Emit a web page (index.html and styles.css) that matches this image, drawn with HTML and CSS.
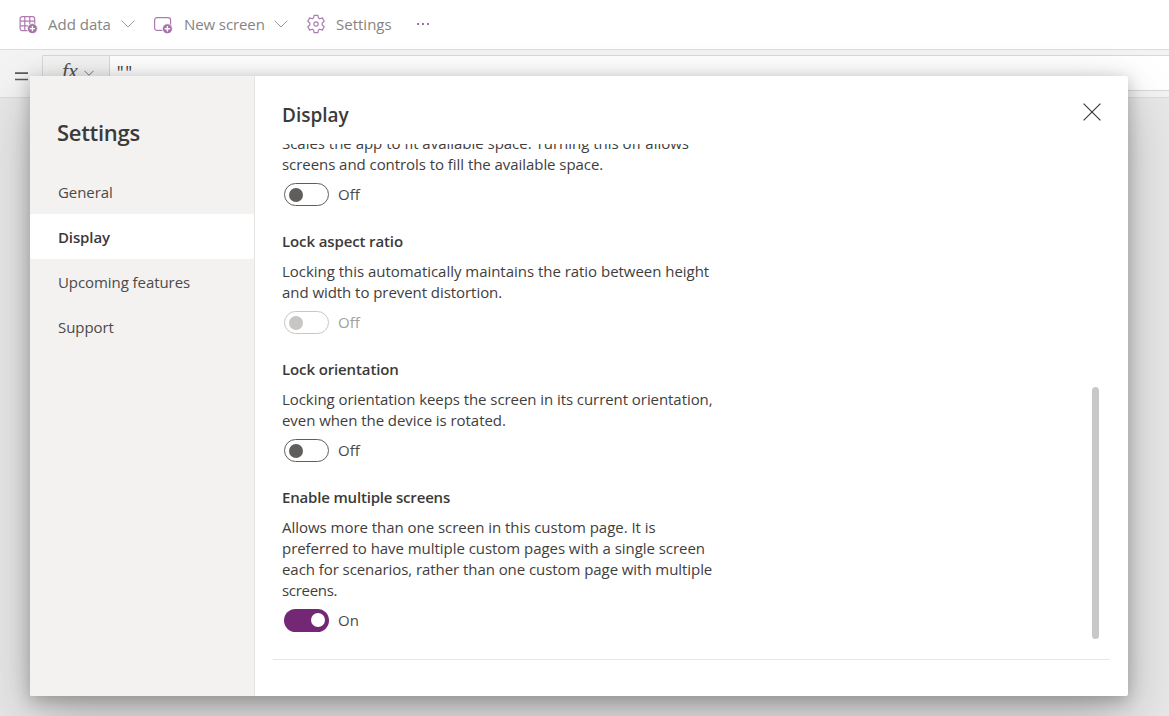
FILE: index.html
```html
<!DOCTYPE html>
<html lang="en">
<head>
<meta charset="utf-8">
<title>Settings</title>
<link rel="stylesheet" href="styles.css">
</head>
<body>
<header class="toolbar">
  <button class="tool data">
    <svg class="icon" width="20" height="20" viewBox="0 0 20 20"><rect x="2.1" y="1.6" width="14.6" height="14" rx="2.2"/><path d="M6.8 1.5v14M11.8 1.5v14M2 6.1h14.8M2 10.9h14.8"/><circle class="dot" cx="14.4" cy="13.6" r="5"/><path class="plus" d="M14.4 10.9v5.4M11.7 13.6h5.4"/></svg>
    <span class="label add">Add data</span>
    <svg class="chev" width="14" height="8" viewBox="0 0 14 8"><path d="M.6.6 7 7 13.4.6"/></svg>
  </button>
  <button class="tool screen">
    <svg class="icon" width="20" height="20" viewBox="0 0 20 20"><rect x="1.6" y="2.6" width="16" height="12.8" rx="2.5"/><circle class="dot" cx="14.4" cy="13.8" r="5"/><path class="plus" d="M14.4 11.1v5.4M11.7 13.8h5.4"/></svg>
    <span class="label new">New screen</span>
    <svg class="chev" width="14" height="8" viewBox="0 0 14 8"><path d="M.6.6 7 7 13.4.6"/></svg>
  </button>
  <button class="tool settings">
    <svg class="gear" width="20" height="20" viewBox="0 0 20 20"><path d="M8.1 1.4h3.8l.6 2.7 1.2.7 2.6-.9 1.9 3.3-2 1.8v2l2 1.8-1.9 3.3-2.6-.9-1.2.7-.6 2.7H8.1l-.6-2.7-1.2-.7-2.6.9-1.9-3.3 2-1.8V9l-2-1.8 1.9-3.3 2.6.9 1.2-.7z"/><circle cx="10" cy="10" r="2.2"/></svg>
    <span class="label set">Settings</span>
  </button>
  <svg class="more" width="12" height="2" viewBox="0 0 12 2"><path d="M0 0h2v2H0zM5 0h2v2H5zM10 0h2v2h-2z"/></svg>
</header>
<div class="formula">
  <svg class="equals" width="13" height="9" viewBox="0 0 13 9"><path d="M0 1.1h13M0 7.5h13"/></svg>
  <div class="fx"><span class="fx-label">fx</span><svg width="10" height="7" viewBox="0 0 10 7"><path d="M.5.8 5 5.3 9.5.8"/></svg></div>
  <div class="field">""</div>
</div>
<main class="canvas"></main>
<section class="dialog">
  <nav class="side">
    <h1>Settings</h1>
    <a class="item general">General</a>
    <a class="item display active">Display</a>
    <a class="item upcoming">Upcoming features</a>
    <a class="item support">Support</a>
  </nav>
  <div class="panel">
    <div class="head"><h2>Display</h2>
      <svg width="18" height="18" viewBox="0 0 18 18"><path d="M.6.6l16.8 16.8M17.4.6.6 17.4"/></svg>
    </div>
    <div class="scroll">
      <div class="option first">
        <p><span class="a1">Scales the app to fit available space. Turning this off allows</span><span class="a2">screens and controls to fill the available space.</span></p>
        <div class="row"><i class="switch"></i><span>Off</span></div>
      </div>
      <div class="option">
        <h3 class="t2">Lock aspect ratio</h3>
        <p><span class="b1">Locking this automatically maintains the ratio between height</span><span class="b2">and width to prevent distortion.</span></p>
        <div class="row disabled"><i class="switch"></i><span>Off</span></div>
      </div>
      <div class="option">
        <h3 class="t3">Lock orientation</h3>
        <p><span class="c1">Locking orientation keeps the screen in its current orientation,</span><span class="c2">even when the device is rotated.</span></p>
        <div class="row"><i class="switch"></i><span>Off</span></div>
      </div>
      <div class="option">
        <h3 class="t4">Enable multiple screens</h3>
        <p><span class="d1">Allows more than one screen in this custom page. It is</span><span class="d2">preferred to have multiple custom pages with a single screen</span><span class="d3">each for scenarios, rather than one custom page with multiple</span><span class="d4">screens.</span></p>
        <div class="row on"><i class="switch"></i><span>On</span></div>
      </div>
      <div class="thumb"></div>
    </div>
    <div class="rule"></div>
  </div>
</section>
</body>
</html>
```
FILE: styles.css
```css
* { box-sizing: border-box; }
body {
  margin: 0;
  height: 716px;
  overflow: hidden;
  display: flex;
  flex-direction: column;
  position: relative;
  font-family: "Open Sans", "Noto Sans", sans-serif;
  font-size: 15px;
  color: #3f3e3d;
  background: #e8e8e8;
}
svg { display: block; flex: none; fill: none; }
h1, h2, h3, p { margin: 0; font-weight: 600; }
h1, h2, h3 { color: #3b3a39; }

.toolbar {
  height: 50px;
  flex: none;
  display: flex;
  align-items: center;
  padding: 0 0 1px 18px;
  background: #fff;
  border-bottom: 1px solid #dcdcdc;
}
.tool {
  display: flex;
  align-items: center;
  padding: 0;
  border: 0;
  background: none;
  font: inherit;
  color: #858483;
}
.label { white-space: nowrap; line-height: 20px; text-align: left; }
.icon { stroke: #ad7bb0; stroke-width: 1.2; margin-top: 1px; }
.icon .dot { fill: #a670a9; stroke: #fff; stroke-width: .8; }
.icon .plus { stroke: #fff; stroke-width: 1.4; }
.chev { stroke: #9aa0a5; stroke-width: 1; }
.label.add { width: 64px; margin: 0 9px 0 10px; }
.screen { margin-left: 18px; }
.label.new { width: 81px; margin: 0 9px 0 11px; letter-spacing: -.1px; }
.settings { margin-left: 18px; }
.gear { stroke: #ad7bb0; stroke-width: 1.2; stroke-linejoin: round; }
.label.set { width: 57px; margin-left: 10px; }
.more { margin-left: 24px; fill: #a86fab; }

.formula {
  height: 48px;
  flex: none;
  display: flex;
  padding: 5px 0 6px 15px;
  background: #f3f3f3;
  border-bottom: 1px solid #dcdcdc;
}
.equals { margin: 17px 14px 0 0; stroke: #5c5b5a; stroke-width: 1.6; }
.fx {
  width: 68px;
  display: flex;
  padding: 4px 0 0 20px;
  border: 1px solid #d8d8d8;
}
.fx-label { font: italic 22px/24px "Liberation Serif", serif; color: #555; width: 16px; margin: -1px 0 0 -1px; }
.fx svg { margin: 10px 0 0 6px; stroke: #777; }
.field {
  flex: 1;
  padding: 9px 0 0 6px;
  border: solid #d8d8d8;
  border-width: 1px 0;
  background: #fff;
  font: 14px/16px "Liberation Mono", monospace;
  color: #444;
}
.canvas { flex: 1; }

.dialog {
  position: absolute;
  left: 30px;
  top: 76px;
  width: 1098px;
  height: 620px;
  display: flex;
  background: #fff;
  border-radius: 2px;
  box-shadow: 0 25.6px 57.6px rgba(0, 0, 0, .22), 0 4.8px 14.4px rgba(0, 0, 0, .18), 0 0 26px rgba(0, 0, 0, .09);
}
.side {
  width: 225px;
  flex: none;
  background: #f3f2f1;
  border-right: 1px solid #e6e5e4;
  border-radius: 2px 0 0 2px;
}
h1 { margin: 41px 0 22px 27px; font-size: 22px; line-height: 30px; letter-spacing: -.3px; white-space: nowrap; }
.item { display: block; height: 45px; padding-left: 28px; line-height: 47px; border-radius: 2px; white-space: nowrap; color: #4c4a48; letter-spacing: -.07px; }
.item.active { background: #fff; font-weight: 600; color: #3b3a39; letter-spacing: -.12px; }

.panel { flex: 1; display: flex; flex-direction: column; }
.head { display: flex; justify-content: space-between; height: 68px; padding: 27px 27px 0; }
h2 { font-size: 19px; line-height: 24px; }
.head svg { stroke: #3b3a39; stroke-width: 1.2; }
.scroll { position: relative; height: 514px; overflow: hidden; padding-left: 27px; }
.option { height: 128px; }
.option.first { height: 87px; margin-top: -11px; margin-bottom: 10px; }
h3 { height: 31px; font-size: 15px; line-height: 22px; }
p { font-weight: 400; line-height: 21px; }
p span { display: block; white-space: nowrap; }
.a1 { letter-spacing: -.02px; }
.a2, .b2, .c2 { letter-spacing: -.055px; }
.b1, .d1 { letter-spacing: -.03px; }
.c1, .d3 { letter-spacing: -.065px; }
.d2 { letter-spacing: -.045px; }
.d4 { letter-spacing: -.3px; }
.t2, .t3 { letter-spacing: -.12px; }
.t4 { letter-spacing: -.18px; }
.row { display: flex; align-items: center; gap: 9px; height: 23px; margin: 8px 0 0 2px; color: #4c4a48; }
.row span { line-height: 21px; }
.switch { width: 45px; height: 23px; border: 1px solid #605e5c; border-radius: 12px; padding: 4px 4px 0; display: flex; }
.switch::after { content: ""; width: 14px; height: 14px; border-radius: 50%; background: #605e5c; }
.disabled { color: #a19f9d; }
.disabled .switch { border-color: #c8c6c4; }
.disabled .switch::after { background: #c8c6c4; }
.on .switch { border: 0; background: #742774; justify-content: flex-end; padding: 4px; }
.on .switch::after { background: #fff; }
.thumb { position: absolute; left: 837px; top: 243px; width: 7px; height: 252px; border-radius: 4px; background: #c8c8c8; }
.rule { height: 1px; margin: 1px 18px 0; background: #e6e6e6; }
```
